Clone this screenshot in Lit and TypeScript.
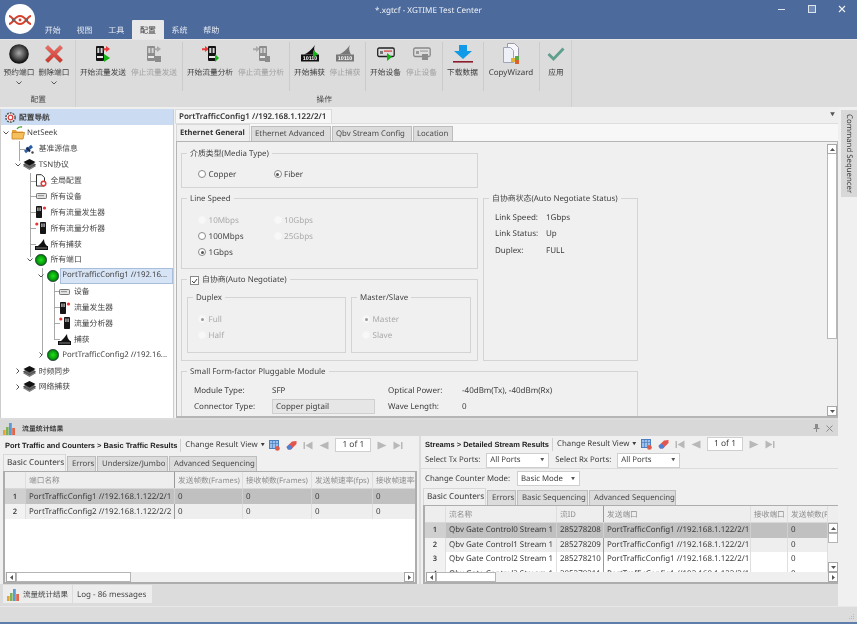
import { LitElement, html, css, svg, nothing, TemplateResult } from 'lit';
import { customElement } from 'lit/decorators.js';

const ic = (w: number, h: number, body: unknown) =>
  html`<svg class="ic" width=${w} height=${h} viewBox="0 0 ${w} ${h}">${body}</svg>`;

const GRAY = '#8d8d8d';

// ribbon icons
const sphere = ic(20, 20, svg`
  <defs><radialGradient id="sph" cx="50%" cy="45%" r="52%">
    <stop offset="0" stop-color="#a8a8a8"/><stop offset=".55" stop-color="#555"/><stop offset="1" stop-color="#0d0d0d"/>
  </radialGradient></defs>
  <circle cx="10" cy="10" r="9.8" fill="url(#sph)"/>`);

const redX = ic(20, 20, svg`
  <defs><linearGradient id="rx" x1="0" y1="0" x2="0" y2="1">
    <stop offset="0" stop-color="#ec7068"/><stop offset="1" stop-color="#c8352b"/>
  </linearGradient></defs>
  <path d="M4 1 L10 7 L16 1 L19 4 L13 10 L19 16 L16 19 L10 13 L4 19 L1 16 L7 10 L1 4Z" fill="url(#rx)" stroke="#b9b3ad" stroke-width=".6"/>`);

const deviceBody = (x: number, on: boolean) => svg`
  <rect x=${x} y="1" width="8" height="15" rx="1" fill=${on ? '#141414' : GRAY}/>
  <rect x=${x + 1.3} y="3" width="2" height="5" fill="#d5d5d5"/>
  <rect x=${x + 4.6} y="3" width="2" height="5" fill="#d5d5d5"/>
  <rect x=${x + 1} y="11" width="6" height="2" fill="#e8e8e8"/>`;

const generator = (on: boolean) => ic(14, 17, svg`
  ${deviceBody(0, on)}
  <path d="M7.5 3.2h2.5V1l4 3-4 3V5.2H7.5z" fill=${on ? '#ea3a3a' : '#aaa'}/>
  ${on ? svg`<path d="M8 9l6 4-6 4z" fill="#12b312"/>` : svg`<rect x="8" y="11" width="6" height="6" fill="#8c8c8c"/>`}`);

const analyzer = (on: boolean) => ic(17, 17, svg`
  <path d="M0 3.2h3V1l4 3-4 3V5.2H0z" fill=${on ? '#ea3a3a' : '#aaa'}/>
  ${deviceBody(6, on)}
  ${on ? svg`<path d="M13 9l4 4-4 4z" fill="#12b312"/>` : svg`<rect x="12" y="11" width="5" height="6" fill="#8c8c8c"/>`}`);

const capture = (on: boolean) => ic(18, 17, svg`
  <path d="M3 9.5 C7 8 11 4 14 0 C12.5 3 13 6 15 9.5z" fill=${on ? '#111' : '#777'}/>
  <rect x="0" y="9.5" width="18" height="7" fill=${on ? '#111' : '#777'}/>
  <text x="9" y="15" text-anchor="middle" font-size="5.4" font-weight="700" font-family="Liberation Sans" fill="#fff">10110</text>
  ${on ? svg`<path d="M12 5l5 4-5 4z" fill="#12b312"/>` : nothing}`);

const device = (on: boolean) => ic(18, 14, svg`
  <rect x=".7" y="1" width="16.5" height="8.5" rx="1.5" fill="#ddd" stroke=${on ? '#222' : '#888'} stroke-width="1.3"/>
  <rect x="3" y="4" width="3" height="3" fill=${on ? '#777' : '#999'}/>
  <rect x="7" y="3.4" width="8" height="1.4" fill=${on ? '#d85050' : '#aaa'}/>
  ${on ? svg`<path d="M10 6l5 4-5 4z" fill="#12b312"/>` : svg`<rect x="9" y="7" width="6" height="6" fill="#8c8c8c"/>`}`);

const download = ic(20, 18, svg`
  <path d="M6 0h8v6h5L10 14 1 6h5z" fill="#0f9be8"/>
  <rect x="0" y="16" width="20" height="1.6" fill="#8c1c2a"/>`);

const copyWizard = ic(19, 21, svg`
  <path d="M5.5.5h7l4 4v13h-11z" fill="#f7f7fb" stroke="#9a9aaa"/>
  <path d="M1.5 4.5h7l3 3v12h-10z" fill="#eef0f8" stroke="#9ea4ba"/>
  <rect x="9" y="15" width="4" height="4" fill="#e2b33a"/>
  <rect x="13" y="13" width="4" height="4" fill="#5aa84c"/>
  <rect x="13" y="17" width="4" height="4" fill="#d8622e"/>`);

const check = ic(18, 14, svg`
  <path d="M1.5 7 L6.5 12 L16.5 1.5" fill="none" stroke="#5f9f8d" stroke-width="2.8"/>`);

// tree icons
const gear = ic(13, 13, svg`
  <circle cx="6.5" cy="6.5" r="4.6" fill="#fff" stroke="#555" stroke-width="1.5" stroke-dasharray="2 .9"/>
  <circle cx="6.5" cy="6.5" r="2.3" fill="none" stroke="#d93a3a" stroke-width="1.3"/>`);

const folder = ic(14, 14, svg`
  <path d="M6 3 C7 1 9 .5 11 1" fill="none" stroke="#4a9e3c" stroke-width="1.3"/>
  <path d="M1 4h4l1 1.5h6v2H1z" fill="#e9a23a"/>
  <path d="M1 13 L1 6.5 H13.5 L12 13z" fill="#f5c05a" stroke="#c77f22" stroke-width=".8"/>`);

const satellite = ic(12, 12, svg`
  <path d="M2 9 L9 3" stroke="#2b5ea8" stroke-width="3"/>
  <path d="M7 8.5 L3.5 4.5" stroke="#1c2b4a" stroke-width="2"/>
  <circle cx="9.5" cy="9.5" r="1.2" fill="#444"/>`);

const stack = ic(13, 13, svg`
  <path d="M6.5 5 L12.5 8 L6.5 11.5 L.5 8z" fill="#999" stroke="#444" stroke-width=".6"/>
  <path d="M6.5 3.5 L12.5 6.5 L6.5 10 L.5 6.5z" fill="#666" stroke="#333" stroke-width=".6"/>
  <path d="M6.5 1 L12.5 4 L6.5 7.5 L.5 4z" fill="#111"/>`);

const docGear = ic(12, 13, svg`
  <path d="M1.5.7h5l3 3V12h-8z" fill="#fff" stroke="#333"/>
  <circle cx="8.5" cy="9.5" r="2.3" fill="#fff" stroke="#e03a3a" stroke-width="1.5"/>`);

const deviceSmall = ic(11, 6, svg`
  <rect x=".5" y=".5" width="10" height="5" rx=".8" fill="#e4e4e4" stroke="#777"/>
  <rect x="2" y="2" width="6" height="1.2" fill="#999"/>`);

const genSmall = ic(12, 12, svg`
  <rect x="1" y="0" width="6" height="12" rx=".8" fill="#151515"/>
  <rect x="2.3" y="1.5" width="1.2" height="3.5" fill="#ccc"/>
  <rect x="4.5" y="1.5" width="1.2" height="3.5" fill="#ccc"/>
  <circle cx="9.5" cy="2" r="1.6" fill="#ee3333"/>`);

const anaSmall = ic(12, 12, svg`
  <circle cx="1.8" cy="2" r="1.6" fill="#ee3333"/>
  <rect x="5" y="0" width="6" height="12" rx=".8" fill="#151515"/>
  <rect x="6.3" y="1.5" width="1.2" height="3.5" fill="#ccc"/>
  <rect x="8.5" y="1.5" width="1.2" height="3.5" fill="#ccc"/>`);

const capSmall = ic(13, 11, svg`
  <path d="M3 7 C5 5 7 3 9 0 C9 3 10 5 12 7z" fill="#111"/>
  <rect x="0" y="7" width="13" height="4" fill="#111"/>
  <rect x="1" y="8.6" width="11" height=".8" fill="#999"/>`);

const ball = ic(12, 12, svg`
  <defs><radialGradient id="gb" cx="50%" cy="50%" r="52%">
    <stop offset="0" stop-color="#1fe01f"/><stop offset=".65" stop-color="#0aa00a"/><stop offset="1" stop-color="#052"/>
  </radialGradient></defs>
  <circle cx="6" cy="6" r="5.7" fill="url(#gb)" stroke="#111" stroke-width=".5"/>`);

const chevDown = ic(6, 4, svg`<path d="M.5.5 L3 3 L5.5.5" fill="none" stroke="#555"/>`);
const chevRight = ic(4, 6, svg`<path d="M.5.5 L3 3 L.5 5.5" fill="none" stroke="#555"/>`);

const bars = ic(13, 13, svg`
  <rect x="0" y="8" width="2.6" height="5" fill="#e3a23c"/>
  <rect x="3" y="5" width="2.6" height="8" fill="#7db356"/>
  <rect x="6" y="1" width="2.8" height="12" fill="#5b9bd5"/>
  <rect x="9.2" y="6" width="2.8" height="7" fill="#e2674a"/>`);

// toolbar icons
const tableIcon = ic(11, 11, svg`
  <rect x=".5" y=".5" width="9" height="8" fill="#9cc0ea" stroke="#4b7fc0"/>
  <path d="M.5 3.5h9M3.5.5v8M6.5.5v8" stroke="#4b7fc0" stroke-width=".7"/>
  <circle cx="8.4" cy="8.4" r="2.4" fill="#e05a4a"/>`);
const eraser = ic(11, 10, svg`
  <path d="M.5 7 L6 1.5 L10.5 1 L10.5 4 L5 9.5 L2 9.5z" fill="#e2564f"/>
  <path d="M.5 7 L3.3 4.3 L6.5 7.8 L5 9.5 L2 9.5z" fill="#4b82d6"/>`);
const navFirst = ic(10, 9, svg`<rect x=".5" y="1" width="1.5" height="7" fill="#b8b8b8"/><path d="M9.5 .5v8L2.5 4.5z" fill="#b8b8b8"/>`);
const navPrev = ic(10, 9, svg`<path d="M9.5 .5v8L.5 4.5z" fill="#b8b8b8"/>`);
const navNext = ic(10, 9, svg`<path d="M.5 .5v8L9.5 4.5z" fill="#b8b8b8"/>`);
const navLast = ic(10, 9, svg`<rect x="8" y="1" width="1.5" height="7" fill="#b8b8b8"/><path d="M.5 .5v8L7.5 4.5z" fill="#b8b8b8"/>`);

interface RibbonItem { label: string; icon: TemplateResult; w: number; off?: boolean; sepAfter?: boolean; menu?: boolean }

const PORT_ITEMS: RibbonItem[] = [
  { label: '预约端口', icon: sphere, w: 35, menu: true },
  { label: '删除端口', icon: redX, w: 35, menu: true },
];
const OP_ITEMS: RibbonItem[] = [
  { label: '开始流量发送', icon: generator(true), w: 51 },
  { label: '停止流量发送', icon: generator(false), w: 51, off: true, sepAfter: true },
  { label: '开始流量分析', icon: analyzer(true), w: 51 },
  { label: '停止流量分析', icon: analyzer(false), w: 51, off: true, sepAfter: true },
  { label: '开始捕获', icon: capture(true), w: 36 },
  { label: '停止捕获', icon: capture(false), w: 35, off: true, sepAfter: true },
  { label: '开始设备', icon: device(true), w: 36 },
  { label: '停止设备', icon: device(false), w: 36, off: true, sepAfter: true },
  { label: '下载数据', icon: download, w: 36, sepAfter: true },
  { label: 'CopyWizard', icon: copyWizard, w: 51, sepAfter: true },
  { label: '应用', icon: check, w: 29 },
];

interface TreeRow { label: string; level: number; icon: TemplateResult; open?: boolean; closed?: boolean; selected?: boolean }

const TREE: TreeRow[] = [
  { label: 'NetSeek', level: 0, icon: folder, open: true },
  { label: '基准源信息', level: 1, icon: satellite },
  { label: 'TSN协议', level: 1, icon: stack, open: true },
  { label: '全局配置', level: 2, icon: docGear },
  { label: '所有设备', level: 2, icon: deviceSmall },
  { label: '所有流量发生器', level: 2, icon: genSmall },
  { label: '所有流量分析器', level: 2, icon: anaSmall },
  { label: '所有捕获', level: 2, icon: capSmall },
  { label: '所有端口', level: 2, icon: ball, open: true },
  { label: 'PortTrafficConfig1 //192.16...', level: 3, icon: ball, open: true, selected: true },
  { label: '设备', level: 4, icon: deviceSmall },
  { label: '流量发生器', level: 4, icon: genSmall },
  { label: '流量分析器', level: 4, icon: anaSmall },
  { label: '捕获', level: 4, icon: capSmall },
  { label: 'PortTrafficConfig2 //192.16...', level: 3, icon: ball, closed: true },
  { label: '时频同步', level: 1, icon: stack, closed: true },
  { label: '网络捕获', level: 1, icon: stack, closed: true },
];

// tree guide lines, in tree coordinates (tree starts at y 125)
const V_LINES = [
  { x: 18, y1: 16, y2: 36 },
  { x: 29, y1: 48, y2: 132 },
  { x: 41, y1: 143, y2: 230 },
  { x: 53, y1: 158, y2: 214 },
];
const H_LINES = [
  { x: 18, y: 24 },
  { x: 29, y: 56 }, { x: 29, y: 71 }, { x: 29, y: 87 }, { x: 29, y: 103 }, { x: 29, y: 119 },
  { x: 53, y: 166 }, { x: 53, y: 182 }, { x: 53, y: 198 }, { x: 53, y: 214 },
];

interface GridCol { title: string; w: number; thick?: boolean }

const LEFT_COLS: GridCol[] = [
  { title: '', w: 21 },
  { title: '端口名称', w: 149, thick: true },
  { title: '发送帧数(Frames)', w: 68 },
  { title: '接收帧数(Frames)', w: 69 },
  { title: '发送帧速率(fps)', w: 61 },
  { title: '接收帧速率(fps)', w: 46 },
];
const LEFT_ROWS = [
  ['1', 'PortTrafficConfig1 //192.168.1.122/2/1', '0', '0', '0', '0'],
  ['2', 'PortTrafficConfig2 //192.168.1.122/2/2', '0', '0', '0', '0'],
];
const RIGHT_COLS: GridCol[] = [
  { title: '', w: 21 },
  { title: '流名称', w: 111 },
  { title: '流ID', w: 47, thick: true },
  { title: '发送端口', w: 147 },
  { title: '接收端口', w: 37 },
  { title: '发送帧数(Frames)', w: 40 },
];
const RIGHT_ROWS = [
  ['1', 'Qbv Gate Control0 Stream 1', '285278208', 'PortTrafficConfig1 //192.168.1.122/2/1', '', '0'],
  ['2', 'Qbv Gate Control1 Stream 1', '285278209', 'PortTrafficConfig1 //192.168.1.122/2/1', '', '0'],
  ['3', 'Qbv Gate Control2 Stream 1', '285278210', 'PortTrafficConfig1 //192.168.1.122/2/1', '', '0'],
  ['4', 'Qbv Gate Control3 Stream 1', '285278211', 'PortTrafficConfig1 //192.168.1.122/2/1', '', '0'],
];

interface TabDef { label: string; w: number; active?: boolean }

@customElement('app-root')
export class AppRoot extends LitElement {
  static styles = css`
    :host {
      display: block;
      width: 865px;
      height: 624px;
      background: #fff;
      overflow: hidden;
    }
    * { box-sizing: border-box; }
    .ic { display: block; flex: none; }

    .window {
      width: 857px;
      height: 624px;
      display: flex;
      flex-direction: column;
      background: #dcdcdc;
      border-bottom: 2px solid #5f7dab;
      font-family: "Noto Sans", "Noto Sans CJK SC", sans-serif;
      font-size: 8px;
      color: #3c3c3c;
      filter: blur(0.35px);
      position: relative;
      text-rendering: geometricPrecision;
    }

    /* title and menu tabs */
    .top { height: 39px; flex: none; background: #4c6a9b; position: relative; }
    .logo {
      position: absolute;
      left: 5px;
      top: 4px;
      width: 30px;
      height: 30px;
      border-radius: 50%;
      background: #fff;
    }
    .titlebar { height: 20px; display: grid; grid-template-columns: 1fr auto 1fr; align-items: center; color: #f0f3f8; }
    .title { font-size: 8.1px; }
    .winbtns { justify-self: end; display: flex; gap: 20px; padding-right: 10px; padding-bottom: 2px; }
    .menutabs { height: 19px; display: flex; padding-left: 37px; color: #e4e9f2; }
    .menutab { width: 31.7px; display: flex; align-items: center; justify-content: center; padding-top: 1px; }
    .menutab.active { background: #e8e8e8; color: #333; border-top-left-radius: 1px; border-top-right-radius: 1px; }

    /* ribbon */
    .ribbon { height: 68px; flex: none; display: flex; background: #dcdcdc; border-top: 1px solid #e6e6e6; }
    .rgroup { display: flex; flex-direction: column; border-right: 1px solid #cfcfcf; padding-left: 1.5px; }
    .rgroup.ports { width: 76px; }
    .rgroup.ops { width: 496px; }
    .ritems { height: 51px; display: flex; }
    .rbtn { display: flex; flex-direction: column; align-items: center; white-space: nowrap; }
    .rbtn.off { color: #a0a0a0; }
    .ricon { height: 24px; display: flex; align-items: center; justify-content: center; padding-top: 3px; flex: none; }
    .rlabel { height: 12px; line-height: 12px; margin-top: 3px; font-size: 7.7px; }
    .rlabel.latin { font-size: 8px; }
    .rmenu { margin-top: 2px; }
    .rsep { width: 1px; margin: 2px 2px 0; background: #cbcbcb; flex: none; }
    .rgname { height: 15px; text-align: center; font-size: 7.7px; line-height: 12px; padding-top: 3px; color: #444; }

    /* main row */
    .main { height: 311px; flex: none; display: flex; background: #efefef; }
    .nav { width: 174px; margin-top: 2px; flex: none; display: flex; flex-direction: column; border: 1px solid #cdcdcd; border-width: 0 1px; background: #fff; }
    .navhead { height: 16px; flex: none; background: #cbdcf2; display: flex; align-items: center; gap: 2px; padding-left: 3px; font-weight: 700; font-size: 7.7px; }
    .tree { position: relative; flex: 1; }
    .vline, .hline { position: absolute; background: #a8a8a8; }
    .vline { width: 1px; }
    .hline { height: 1px; width: 6px; }
    .trow { height: 15.88px; display: flex; align-items: center; white-space: nowrap; position: relative; }
    .texp { width: 10px; flex: none; display: flex; justify-content: center; }
    .ticon { width: 13px; flex: none; display: flex; justify-content: center; }
    .tlabel { margin-left: 2px; padding: 0 1px; font-size: 7.8px; color: #444; }
    .trow.picked .tlabel { background: #d7e4f6; outline: 1px solid #a9bedb; outline-offset: -1px; width: 113px; height: 16px; line-height: 15px; margin-left: 1px; padding-left: 2px; }

    .doc { width: 663px; margin: 2px 0 0 1px; flex: none; display: flex; flex-direction: column; }
    .docstrip { height: 14px; flex: none; display: flex; justify-content: space-between; align-items: flex-end; }
    .doctab { width: 157px; height: 14px; background: #f7f7f7; border: 1px solid #dcdcdc; border-bottom: none; font-weight: 600; font-size: 8px; line-height: 13px; padding-left: 3px; white-space: nowrap; color: #333; }
    .docmenu { font-size: 5px; color: #555; padding: 0 3px 5px 0; }
    .docbody { flex: 1; display: flex; flex-direction: column; background: #f7f7f7; border-top: 1px solid #dedede; min-height: 0; }
    .tabs { display: flex; align-items: flex-end; height: 17px; flex: none; padding-left: 1px; }
    .tab { height: 15px; background: #dcdcdc; border: 1px solid #bdbdbd; border-bottom: none; margin-right: 1px; padding-left: 3px; line-height: 14.5px; white-space: nowrap; overflow: hidden; color: #4a4a4a; font-size: 7.8px; }
    .tab.active { height: 17px; background: #f0f0f0; border-color: #d8d8d8; color: #333; line-height: 16.5px; }
    .docbody .tab.active { font-weight: 700; font-size: 7.6px; }
    .pane .tabs { padding-left: 3px; }
    .pane .tab { padding-left: 4px; }
    .pane .tab.active { font-size: 8.2px; padding-left: 3px; }
    .pane.right .tabs { padding-left: 2px; }
    .panel { flex: 1; min-height: 0; display: flex; background: #f0f0f0; border: 1px solid #b5b5b5; border-width: 1px 1px 2px 1px; margin-left: 1px; }
    .form {
      flex: 1;
      min-width: 0;
      overflow: hidden;
      padding: 11px 0 0 4px;
      display: grid;
      grid-template-columns: 297px 155px;
      grid-template-rows: 35px 71px 82px 60px;
      column-gap: 5px;
      row-gap: 10px;
      align-content: start;
    }
    .group { position: relative; border: 1px solid #d4d4d4; }
    .legend { position: absolute; left: 5px; top: -6px; padding: 0 3px; height: 13px; line-height: 13px; background: #f0f0f0; white-space: nowrap; display: flex; align-items: center; gap: 3px; font-size: 7.9px; color: #444; }
    .media { padding: 12px 0 0 16px; }
    .speed { padding: 13px 0 0 16px; }
    .status { grid-column: 2; grid-row: 2 / span 2; padding: 10px 0 0 11px; }
    .neg { padding: 17px 0 0 5px; display: flex; gap: 5px; align-items: flex-start; }
    .sfp { grid-column: 1 / span 2; padding: 10px 0 0 12px; border-bottom: none; }
    .radios { display: grid; grid-template-columns: 75.5px 75.5px; grid-auto-rows: 16px; align-items: center; }
    .radio { display: flex; align-items: center; gap: 2.5px; white-space: nowrap; font-size: 8.1px; color: #444; }
    .radio.off { color: #aaa; }
    .rdot { width: 8px; height: 8px; border-radius: 50%; border: 1px solid #8b8b8b; background: #fff; display: flex; align-items: center; justify-content: center; flex: none; }
    .rdot i { width: 3px; height: 3px; border-radius: 50%; background: #555; }
    .radio.off .rdot { border-color: #f6f6f6; background: #f8f8f8; }
    .radio.off .rdot i { background: #999; }
    .sub { height: 56px; padding: 13px 0 0 10px; }
    .sub .radios { grid-template-columns: 60px; }
    .cb { width: 9px; height: 9px; background: #fff; border: 1px solid #8b8b8b; display: flex; align-items: center; justify-content: center; }
    .kv { display: grid; grid-template-columns: 51px auto; grid-auto-rows: 16.5px; align-items: center; font-size: 8px; }
    .sfpgrid { display: grid; grid-template-columns: 78px 116px 74px auto; grid-auto-rows: 16px; align-items: center; font-size: 8px; white-space: nowrap; }
    .ro { width: 103px; height: 15px; margin-top: 0; background: #e6e6e6; border: 1px solid #cfcfcf; padding-left: 3px; line-height: 13px; }
    .vbar { width: 10px; flex: none; margin: 2px 0 0 0; display: flex; flex-direction: column; }
    .sbtn { width: 10px; height: 10px; flex: none; background: #fff; border: 1px solid #a8a8a8; display: flex; align-items: center; justify-content: center; }
    .vthumb { height: 185px; background: #fff; border: 1px solid #b8b8b8; border-top: none; }
    .vtrack { flex: 1; }
    .side { flex: 1; display: flex; justify-content: flex-end; padding-top: 3px; background: #f0f0f0; }
    .sidetab { width: 16px; height: 87px; background: #d8d8d8; writing-mode: vertical-rl; line-height: 16px; text-align: center; font-size: 7.8px; }

    /* bottom docks */
    .bottom { height: 188px; flex: none; display: flex; background: #dcdcdc; }
    .dock { width: 838px; flex: none; display: flex; flex-direction: column; padding-top: 2px; }
    .rest { flex: 1; background: #f0f0f0; }
    .dockhead { height: 16px; flex: none; display: flex; align-items: center; gap: 6px; padding: 0 3px; font-weight: 700; background: #d8d8d8; font-size: 6.9px; }
    .dockhead .sp { flex: 1; }
    .dockhead .btn:last-child { margin-right: 2px; }
    .panes { height: 148px; flex: none; display: flex; gap: 2px; }
    .pane { width: 419px; background: #f0f0f0; display: flex; flex-direction: column; }
    .pane.right { flex: 1; width: auto; }
    .bar { height: 18px; flex: none; display: flex; align-items: center; padding-left: 5px; white-space: nowrap; font-size: 7.85px; }
    .bar.short { height: 16px; padding-left: 4px; }
    .bartitle { font-family: "Liberation Sans", "Noto Sans CJK SC", sans-serif; font-weight: 700; font-size: 7.5px; color: #222; }
    .barsep { width: 1px; height: 13px; background: #d0d0d0; margin: 0 4px 0 3px; flex: none; }
    .view { width: 80px; flex: none; display: flex; align-items: center; gap: 3px; }
    .view i { font-style: normal; font-size: 4px; }
    .navs { display: flex; align-items: center; gap: 6px; margin-left: 4px; }
    .pagebox { width: 36px; height: 14px; background: #fff; border: 1px solid #cfcfcf; text-align: center; line-height: 12px; font-size: 8.4px; }
    .selrow { height: 16px; flex: none; display: flex; align-items: center; padding-left: 4px; gap: 6px; font-size: 7.8px; white-space: nowrap; }
    .selrow.line { border-bottom: 1px solid #dcdcdc; height: 17px; }
    .selrow.tall { height: 19px; gap: 7px; }
    .sel { width: 63px; height: 15px; background: #fff; border: 1px solid #cfcfcf; display: flex; align-items: center; justify-content: space-between; padding: 0 4px 0 3px; }
    .sel i { font-style: normal; font-size: 4px; color: #555; }
    .dg { flex: 1; min-height: 0; margin: 0 2px 0 3px; border: 2px solid #adadad; border-top-width: 1px; background: #fff; display: flex; flex-direction: column; overflow: hidden; }
    .dg.in { margin: 0 2px 0 2px; }
    .dgbody { flex: 1; min-height: 0; display: flex; overflow: hidden; }
    .dgrows { flex: 1; min-width: 0; overflow: hidden; }
    .row { display: grid; height: 15px; white-space: nowrap; overflow: hidden; background: #fff; }
    .dg.in .row { height: 14.5px; }
    .row.head, .dg.in .row.head { height: 17px; background: #eeeeee; color: #8c8c8c; border-bottom: 1px solid #d8d8d8; }
    .row.r0 { background: #c0c0c0; }
    .row.r1 { background: #eeeeee; }
    .cell { padding-left: 3px; line-height: 16px; overflow: hidden; border-right: 1px solid #dfdfdf; font-size: 7.95px; color: #3a3a3a; }
    .dg.in .cell { line-height: 14.5px; }
    .row.r0 .cell { border-right-color: #cfcfcf; }
    .row.head .cell, .dg.in .row.head .cell { line-height: 18px; color: #8c8c8c; font-size: 7.7px; }
    .cell.num { text-align: center; padding: 0; font-weight: 600; background: #f2f2f2; font-size: 7.5px; }
    .row.r0 .cell.num { background: #d0d0d0; }
    .cell.thick { border-right: 1.5px solid #9a9a9a; }
    .hbar { height: 10px; flex: none; display: flex; background: #efefef; padding: 0 1px; }
    .hthumb { background: #fff; border: 1px solid #b5b5b5; }
    .hbar .sp { flex: 1; }
    .gvbar { width: 10px; flex: none; display: flex; flex-direction: column; background: #f0f0f0; margin-right: 1px; }
    .gvthumb { height: 10px; background: #fff; border: 1px solid #b5b5b5; }
    .docks { height: 21px; flex: none; display: flex; align-items: flex-start; padding: 1px 0 0 3px; gap: 1px; }
    .dtab { height: 18px; background: #ededed; display: flex; align-items: center; gap: 3px; padding-left: 4px; white-space: nowrap; font-size: 8px; color: #444; }
    .dtab span { font-size: 7.5px; }
    .status-bar { height: 16px; flex: none; border-top: 1px solid #e8e8e8; background: #dcdcdc; display: flex; justify-content: flex-end; align-items: flex-end; padding: 0 2px 2px 0; }
  `;

  private ribbonItems(items: RibbonItem[]) {
    return html`<div class="ritems">
      ${items.map(
        (it) => html`
          <div class="rbtn ${it.off ? 'off' : ''}" style="width:${it.w}px">
            <div class="ricon">${it.icon}</div>
            <div class="rlabel ${it.label === 'CopyWizard' ? 'latin' : ''}">${it.label}</div>
            ${it.menu ? html`<div class="rmenu">${chevDown}</div>` : nothing}
          </div>
          ${it.sepAfter ? html`<div class="rsep"></div>` : nothing}
        `
      )}
    </div>`;
  }

  private tabs(list: TabDef[]) {
    return html`<div class="tabs">
      ${list.map(
        (t) => html`<div class="tab ${t.active ? 'active' : ''}" style="width:${t.w}px">${t.label}</div>`
      )}
    </div>`;
  }

  private radio(label: string, on = false, off = false) {
    return html`<div class="radio ${off ? 'off' : ''}">
      <span class="rdot">${on ? html`<i></i>` : nothing}</span>${label}
    </div>`;
  }

  private toolbar(title: string, short = false) {
    return html`<div class="bar ${short ? 'short' : ''}">
      <span class="bartitle">${title}</span>
      <span class="barsep"></span>
      <span class="view">Change Result View<i>▼</i></span>
      <span class="navs">
        ${tableIcon}${eraser}${navFirst}${navPrev}
        <span class="pagebox">1 of 1</span>
        ${navNext}${navLast}
      </span>
    </div>`;
  }

  private grid(cols: GridCol[], rows: string[][], thumbW: number, inset = false, vbar = false) {
    const tpl = cols.map((c) => `${c.w}px`).join(' ');
    const cells = (r: string[]) =>
      r.map(
        (v, i) => html`<div class="cell ${i === 0 ? 'num' : ''} ${cols[i].thick ? 'thick' : ''}">${v}</div>`
      );
    return html`<div class="dg ${inset ? 'in' : ''}">
      <div class="row head" style="grid-template-columns:${tpl}">
        ${cols.map((c) => html`<div class="cell ${c.thick ? 'thick' : ''}">${c.title}</div>`)}
      </div>
      <div class="dgbody">
        <div class="dgrows">
          ${rows.map(
            (r, i) => html`<div class="row r${i}" style="grid-template-columns:${tpl}">${cells(r)}</div>`
          )}
        </div>
        ${vbar
          ? html`<div class="gvbar">
              <div class="sbtn">${ic(5, 3, svg`<path d="M2.5 0L5 3H0z" fill="#555"/>`)}</div>
              <div class="gvthumb"></div>
              <div class="vtrack"></div>
              <div class="sbtn">${ic(5, 3, svg`<path d="M2.5 3L5 0H0z" fill="#555"/>`)}</div>
            </div>`
          : nothing}
      </div>
      <div class="hbar">
        <div class="sbtn">${ic(3, 5, svg`<path d="M0 2.5L3 0v5z" fill="#555"/>`)}</div>
        <div class="hthumb" style="width:${thumbW}px"></div>
        <div class="sp"></div>
        <div class="sbtn">${ic(3, 5, svg`<path d="M3 2.5L0 0v5z" fill="#555"/>`)}</div>
      </div>
    </div>`;
  }

  private logo() {
    return html`<div class="logo">
      ${ic(30, 30, svg`
        <path d="M4 12 C8 12 9 20 15 20 C21 20 22 12 26 12" fill="none" stroke="#d9402c" stroke-width="2"/>
        <path d="M4 20 C8 20 9 12 15 12 C21 12 22 20 26 20" fill="none" stroke="#d9402c" stroke-width="2"/>
        <circle cx="8.5" cy="16" r="1.7" fill="#666"/>
        <circle cx="21.5" cy="16" r="1.7" fill="#666"/>
        <circle cx="15" cy="16" r="1.4" fill="#d9402c"/>`)}
    </div>`;
  }

  private treeView() {
    return html`<div class="tree">
      ${V_LINES.map(
        (l) => html`<div class="vline" style="left:${l.x}px;top:${l.y1}px;height:${l.y2 - l.y1}px"></div>`
      )}
      ${H_LINES.map((l) => html`<div class="hline" style="left:${l.x}px;top:${l.y}px"></div>`)}
      ${TREE.map(
        (r) => html`<div class="trow ${r.selected ? 'picked' : ''}" style="padding-left:${r.level * 11.75}px">
          <span class="texp">${r.open ? chevDown : r.closed ? chevRight : nothing}</span>
          <span class="ticon">${r.icon}</span>
          <span class="tlabel">${r.label}</span>
        </div>`
      )}
    </div>`;
  }

  private configForm() {
    return html`<div class="form">
      <div class="group media">
        <div class="legend">介质类型(Media Type)</div>
        <div class="radios">${this.radio('Copper')}${this.radio('Fiber', true)}</div>
      </div>
      <div></div>
      <div class="group speed">
        <div class="legend">Line Speed</div>
        <div class="radios">
          ${this.radio('10Mbps', false, true)}${this.radio('10Gbps', false, true)}
          ${this.radio('100Mbps')}${this.radio('25Gbps', false, true)}
          ${this.radio('1Gbps', true)}
        </div>
      </div>
      <div class="group status">
        <div class="legend">自协商状态(Auto Negotiate Status)</div>
        <div class="kv">
          <span>Link Speed:</span><span>1Gbps</span>
          <span>Link Status:</span><span>Up</span>
          <span>Duplex:</span><span>FULL</span>
        </div>
      </div>
      <div class="group neg">
        <div class="legend">
          <span class="cb">${ic(7, 6, svg`<path d="M1 3 L3 5 L6 1" fill="none" stroke="#444"/>`)}</span>自协商(Auto Negotiate)
        </div>
        <div class="group sub" style="width:159px">
          <div class="legend">Duplex</div>
          <div class="radios">${this.radio('Full', true, true)}${this.radio('Half', false, true)}</div>
        </div>
        <div class="group sub" style="width:120px">
          <div class="legend">Master/Slave</div>
          <div class="radios">${this.radio('Master', true, true)}${this.radio('Slave', false, true)}</div>
        </div>
      </div>
      <div class="group sfp">
        <div class="legend">Small Form-factor Pluggable Module</div>
        <div class="sfpgrid">
          <span>Module Type:</span><span>SFP</span><span>Optical Power:</span><span>-40dBm(Tx), -40dBm(Rx)</span>
          <span>Connector Type:</span><span class="ro">Copper pigtail</span><span>Wave Length:</span><span>0</span>
        </div>
      </div>
    </div>`;
  }

  render() {
    return html`<div class="window">
      <div class="top">
        <div class="titlebar">
          <span></span>
          <span class="title">*.xgtcf - XGTIME Test Center</span>
          <span class="winbtns">
            ${ic(10, 10, svg`<rect x="1" y="5" width="7" height="1" fill="#dfe5ef"/>`)}
            ${ic(10, 10, svg`<rect x="1.5" y="1.5" width="7" height="7" fill="#6f8ab4" stroke="#dfe5ef"/>`)}
            ${ic(10, 10, svg`<path d="M2 2 L8 8 M8 2 L2 8" stroke="#eef1f6" stroke-width="1.1"/>`)}
          </span>
        </div>
        <div class="menutabs">
          ${['开始', '视图', '工具', '配置', '系统', '帮助'].map(
            (t) => html`<div class="menutab ${t === '配置' ? 'active' : ''}">${t}</div>`
          )}
        </div>
        ${this.logo()}
      </div>

      <div class="ribbon">
        <div class="rgroup ports">${this.ribbonItems(PORT_ITEMS)}<div class="rgname">配置</div></div>
        <div class="rgroup ops">${this.ribbonItems(OP_ITEMS)}<div class="rgname">操作</div></div>
      </div>

      <div class="main">
        <div class="nav">
          <div class="navhead">${gear}配置导航</div>
          ${this.treeView()}
        </div>
        <div class="doc">
          <div class="docstrip">
            <div class="doctab">PortTrafficConfig1 //192.168.1.122/2/1</div>
            <div class="docmenu">▼</div>
          </div>
          <div class="docbody">
            ${this.tabs([
              { label: 'Ethernet General', w: 74, active: true },
              { label: 'Ethernet Advanced', w: 80 },
              { label: 'Qbv Stream Config', w: 80 },
              { label: 'Location', w: 40 },
            ])}
            <div class="panel">
              ${this.configForm()}
              <div class="vbar">
                <div class="sbtn">${ic(5, 3, svg`<path d="M2.5 0L5 3H0z" fill="#555"/>`)}</div>
                <div class="vthumb"></div>
                <div class="vtrack"></div>
                <div class="sbtn">${ic(5, 3, svg`<path d="M2.5 3L5 0H0z" fill="#555"/>`)}</div>
              </div>
            </div>
          </div>
        </div>
        <div class="side"><div class="sidetab">Command Sequencer</div></div>
      </div>

      <div class="bottom">
        <div class="dock">
          <div class="dockhead">
            ${bars}<span>流量统计结果</span>
            <span class="sp"></span>
            <span class="btn">${ic(7, 8, svg`<path d="M2 0h3v4h1.5v1H4v3H3V5H.5V4H2z" fill="#8a8a8a"/>`)}</span>
            <span class="btn">${ic(7, 7, svg`<path d="M.5 .5 L6.5 6.5 M6.5 .5 L.5 6.5" stroke="#8a8a8a"/>`)}</span>
          </div>
          <div class="panes">
            <div class="pane">
              ${this.toolbar('Port Traffic and Counters > Basic Traffic Results')}
              ${this.tabs([
                { label: 'Basic Counters', w: 63, active: true },
                { label: 'Errors', w: 29 },
                { label: 'Undersize/Jumbo', w: 71 },
                { label: 'Advanced Sequencing', w: 88 },
              ])}
              ${this.grid(LEFT_COLS, LEFT_ROWS, 115)}
            </div>
            <div class="pane right">
              ${this.toolbar('Streams > Detailed Stream Results', true)}
              <div class="selrow line">
                <span>Select Tx Ports:</span>
                <span class="sel">All Ports<i>▼</i></span>
                <span>Select Rx Ports:</span>
                <span class="sel">All Ports<i>▼</i></span>
              </div>
              <div class="selrow tall">
                <span>Change Counter Mode:</span>
                <span class="sel">Basic Mode<i>▼</i></span>
              </div>
              ${this.tabs([
                { label: 'Basic Counters', w: 63, active: true },
                { label: 'Errors', w: 29 },
                { label: 'Basic Sequencing', w: 71 },
                { label: 'Advanced Sequencing', w: 87 },
              ])}
              ${this.grid(RIGHT_COLS, RIGHT_ROWS, 60, true, true)}
            </div>
          </div>
          <div class="docks">
            <div class="dtab" style="width:69px">${bars}<span>流量统计结果</span></div>
            <div class="dtab" style="width:79px">Log - 86 messages</div>
          </div>
        </div>
        <div class="rest"></div>
      </div>

      <div class="status-bar">
        ${ic(6, 6, svg`<g fill="#bbb"><rect x="4" y="0" width="1" height="1"/><rect x="2" y="2" width="1" height="1"/><rect x="4" y="2" width="1" height="1"/><rect x="0" y="4" width="1" height="1"/><rect x="2" y="4" width="1" height="1"/><rect x="4" y="4" width="1" height="1"/></g>`)}
      </div>
    </div>`;
  }
}
